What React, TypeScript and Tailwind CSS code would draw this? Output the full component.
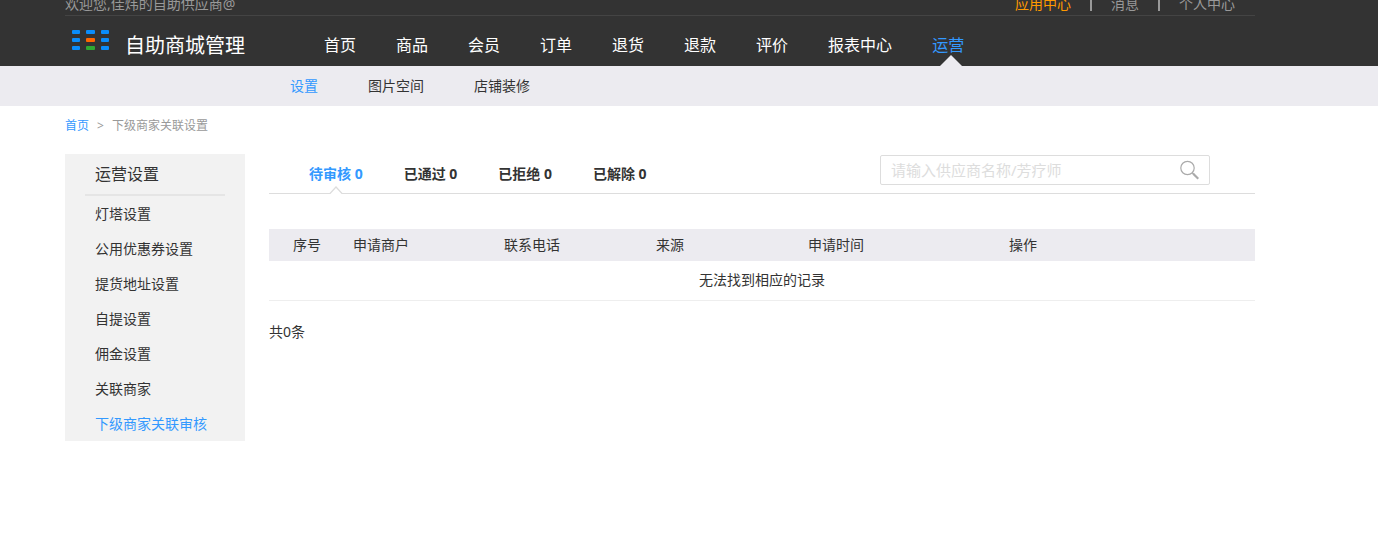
import React, { useState } from "react";

const mainNav = ["首页", "商品", "会员", "订单", "退货", "退款", "评价", "报表中心", "运营"];
const subNav = ["设置", "图片空间", "店铺装修"];
const sideMenu = ["灯塔设置", "公用优惠券设置", "提货地址设置", "自提设置", "佣金设置", "关联商家", "下级商家关联审核"];
const tabs = ["待审核", "已通过", "已拒绝", "已解除"];

const columns = [
  { label: "序号", className: "w-[84px] pl-6" },
  { label: "申请商户", className: "w-[151px]" },
  { label: "联系电话", className: "w-[152px]" },
  { label: "来源", className: "w-[152px]" },
  { label: "申请时间", className: "w-[201px]" },
  { label: "操作", className: "" },
];

const Logo: React.FC = () => (
  <svg width="37" height="22" viewBox="0 0 37 22" aria-hidden="true">
    <rect x="0" y="0" width="8" height="4" rx="1" fill="#0a8dfb" />
    <rect x="14" y="0" width="9" height="4" rx="1" fill="#0a8dfb" />
    <rect x="29" y="0" width="8" height="4" rx="1" fill="#0a8dfb" />
    <rect x="0" y="8" width="8" height="4" rx="1" fill="#0a8dfb" />
    <rect x="14" y="8" width="9" height="4" rx="1" fill="#ff6600" />
    <rect x="29" y="8" width="8" height="4" rx="1" fill="#0a8dfb" />
    <rect x="0" y="16" width="8" height="4" rx="1" fill="#0a8dfb" />
    <rect x="14" y="16" width="9" height="4" rx="1" fill="#2fa832" />
    <rect x="29" y="16" width="8" height="4" rx="1" fill="#0a8dfb" />
  </svg>
);

const Header: React.FC = () => (
  <header className="bg-[#333] pl-[65px] pr-[123px]">
    <div className="flex h-4 items-end justify-between overflow-hidden border-b border-[#444] text-sm leading-[22px] text-[#999]">
      <span>欢迎您,佳炜的自助供应商@</span>
      <div className="flex items-end gap-[19px] pr-5">
        <a href="#" className="text-[#ff9900]">应用中心</a>
        <span className="mb-1 h-4 w-0.5 bg-[#999]" />
        <a href="#">消息</a>
        <span className="mb-1 h-4 w-0.5 bg-[#999]" />
        <a href="#">个人中心</a>
      </div>
    </div>
    <div className="flex h-[50px] items-center">
      <a href="#" className="flex w-[259px] shrink-0 items-center gap-4 pl-[7px]">
        <Logo />
        <span className="pt-2.5 text-xl leading-7 text-white">自助商城管理</span>
      </a>
      <nav className="flex h-full items-center gap-10 pt-2 text-base text-white">
        {mainNav.map((item) =>
          item === "运营" ? (
            <a key={item} href="#" className="relative flex h-full items-center whitespace-nowrap text-[#3399ff]">
              {item}
              <svg className="absolute bottom-0 left-2" width="22" height="11" viewBox="0 0 22 11">
                <path d="M0 11 11 0l11 11z" fill="#ecebf0" />
              </svg>
            </a>
          ) : (
            <a key={item} href="#" className="whitespace-nowrap">{item}</a>
          )
        )}
      </nav>
    </div>
  </header>
);

const Sidebar: React.FC = () => (
  <aside className="w-[180px] shrink-0 bg-[#f2f2f2]">
    <h2 className="mx-5 h-[42px] border-b-2 border-[#e5e5e5] pl-2.5 text-base leading-10">运营设置</h2>
    <ul>
      {sideMenu.map((item) => (
        <li key={item} className="h-[35px] pl-[30px] leading-[35px]">
          <a href="#" className={item === "下级商家关联审核" ? "text-[#3399ff]" : ""}>{item}</a>
        </li>
      ))}
    </ul>
  </aside>
);

const App: React.FC = () => {
  const [active, setActive] = useState("待审核");
  const [keyword, setKeyword] = useState("");

  return (
    <div className="min-h-screen bg-white font-['Noto_Sans','Noto_Sans_CJK_SC',sans-serif] text-sm text-[#333]">
      <Header />

      <nav className="flex h-10 items-center gap-[50px] bg-[#ecebf0] pl-[290px]">
        {subNav.map((item) => (
          <a key={item} href="#" className={item === "设置" ? "text-[#3399ff]" : ""}>{item}</a>
        ))}
      </nav>

      <div className="flex h-12 gap-2 pl-[65px] text-xs leading-10 text-[#999]">
        <a href="#" className="text-[#3399ff]">首页</a>
        <span>&gt;</span>
        <span>下级商家关联设置</span>
      </div>

      <div className="flex items-start gap-6 pl-[65px] pr-[123px]">
        <Sidebar />

        <main className="min-w-0 flex-1">
          <div className="flex h-10 items-stretch justify-between border-b border-[#ddd] pl-10 pr-[45px]">
            <div role="tablist" className="flex gap-[41px]">
              {tabs.map((tab) => (
                <button
                  key={tab}
                  type="button"
                  role="tab"
                  aria-selected={active === tab}
                  onClick={() => setActive(tab)}
                  className={`relative flex items-center font-bold ${active === tab ? "text-[#3399ff]" : ""}`}
                >
                  {tab} 0
                  {active === tab && (
                    <svg className="absolute -bottom-px left-5" width="14" height="8" viewBox="0 0 14 8" fill="none">
                      <path d="M1 8 7 1l6 7z" fill="#fff" />
                      <path d="M1 7.5 7 1l6 6.5" stroke="#ddd" strokeWidth="1.2" />
                    </svg>
                  )}
                </button>
              ))}
            </div>
            <form
              onSubmit={(e) => e.preventDefault()}
              className="mt-px flex h-[30px] w-[330px] items-center rounded-xs border border-[#ddd] px-2.5"
            >
              <input
                type="text"
                aria-label="搜索"
                value={keyword}
                onChange={(e) => setKeyword(e.target.value)}
                placeholder="请输入供应商名称/芳疗师"
                className="min-w-0 flex-1 text-[15px] leading-6 outline-none placeholder:text-[#ddd]"
              />
              <button type="submit" aria-label="提交搜索">
                <svg width="19" height="20" viewBox="0 0 19 20" fill="none" stroke="#aaa">
                  <circle cx="7.5" cy="8" r="6.7" strokeWidth="1.2" />
                  <path d="M12.2 12.7 14 14.5" strokeWidth="1.4" />
                  <path d="m13.2 13.7 5.1 5.1" strokeWidth="2.2" />
                </svg>
              </button>
            </form>
          </div>

          <table className="mt-[35px] w-full table-fixed">
            <thead>
              <tr className="h-8 bg-[#ecebf0] text-left">
                {columns.map((col) => (
                  <th key={col.label} className={`font-normal ${col.className}`}>{col.label}</th>
                ))}
              </tr>
            </thead>
            <tbody>
              <tr className="h-[39px] border-b border-[#eee] text-center">
                <td colSpan={6}>无法找到相应的记录</td>
              </tr>
            </tbody>
          </table>

          <p className="mt-5 leading-[22px]">共0条</p>
        </main>
      </div>
    </div>
  );
};

export default App;
